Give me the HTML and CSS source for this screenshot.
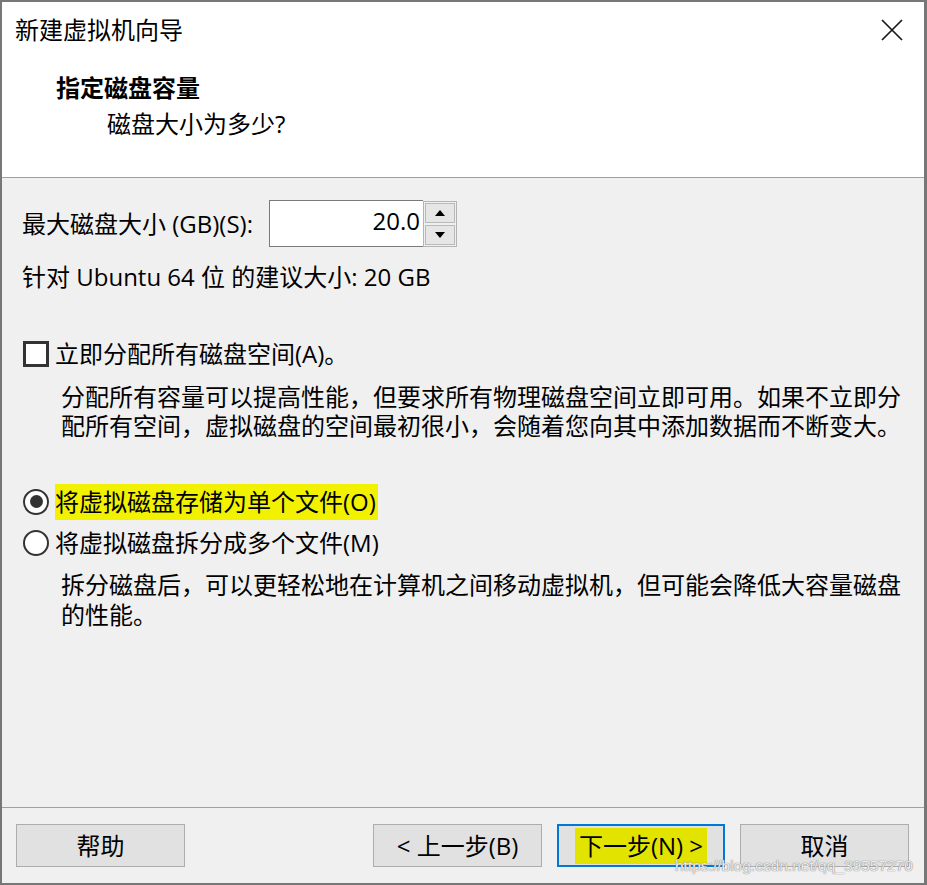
FILE: index.html
```html
<!DOCTYPE html>
<html lang="zh-CN">
<head>
<meta charset="utf-8">
<title>新建虚拟机向导</title>
<link rel="stylesheet" href="styles.css">
</head>
<body>
<div class="window">
  <div class="header">
    <div class="titlebar">
      <span class="title">新建虚拟机向导</span>
      <svg class="close" width="22" height="22" viewBox="0 0 22 22"><path d="M1 1 L21 21 M21 1 L1 21" stroke="#1a1a1a" stroke-width="1.7" fill="none"/></svg>
    </div>
    <div class="heading">指定磁盘容量</div>
    <div class="subheading">磁盘大小为多少?</div>
  </div>
  <div class="body">
    <div class="size-row">
      <span class="label">最大磁盘大小 (GB)(S):</span>
      <div class="spin">
        <div class="spin-input">20.0</div>
        <div class="spin-buttons">
          <div class="spin-btn"><svg width="10" height="6" viewBox="0 0 10 6"><path d="M0 6 L5 0 L10 6 Z" fill="#000"/></svg></div>
          <div class="spin-btn"><svg width="10" height="6" viewBox="0 0 10 6"><path d="M0 0 L10 0 L5 6 Z" fill="#000"/></svg></div>
        </div>
      </div>
    </div>
    <div class="recommend">针对 Ubuntu 64 位 的建议大小: 20 GB</div>
    <div class="check-row">
      <span class="checkbox"></span>
      <span class="opt-label">立即分配所有磁盘空间(A)。</span>
    </div>
    <div class="desc desc-a">分配所有容量可以提高性能，但要求所有物理磁盘空间立即可用。如果不立即分<br>配所有空间，虚拟磁盘的空间最初很小，会随着您向其中添加数据而不断变大。</div>
    <div class="radio-row radio-first">
      <span class="radio checked"></span>
      <span class="opt-label hl">将虚拟磁盘存储为单个文件(O)</span>
    </div>
    <div class="radio-row">
      <span class="radio"></span>
      <span class="opt-label">将虚拟磁盘拆分成多个文件(M)</span>
    </div>
    <div class="desc desc-b">拆分磁盘后，可以更轻松地在计算机之间移动虚拟机，但可能会降低大容量磁盘<br>的性能。</div>
  </div>
  <div class="footer">
    <button class="btn">帮助</button>
    <div class="spacer"></div>
    <div class="nav">
      <button class="btn">&lt; 上一步(B)</button>
      <button class="btn primary"><span class="hl-btn">下一步(N) &gt;</span></button>
      <button class="btn">取消</button>
    </div>
  </div>
  <div class="watermark">https://blog.csdn.net/qq_39557270</div>
</div>
</body>
</html>
```
FILE: styles.css
```css
* { box-sizing: border-box; }
html, body { margin: 0; padding: 0; }
body {
  background: #fff;
  font-family: "Open Sans", "Noto Sans CJK SC", sans-serif;
  font-size: 24px;
  color: #000;
}
.window {
  position: relative;
  width: 927px;
  height: 885px;
  border: 2px solid #777;
  border-right-width: 3px;
  background: #f0f0f0;
  display: flex;
  flex-direction: column;
}
.header {
  background: #fff;
  height: 176px;
  border-bottom: 1px solid #a0a0a0;
  flex: none;
}
.titlebar {
  display: flex;
  justify-content: space-between;
  align-items: center;
  padding: 12px 21px 0 13px;
  height: 44px;
}
.title { line-height: 32px; }
.heading {
  font-weight: bold;
  line-height: 32px;
  margin: 25px 0 0 54px;
  font-family: "Noto Sans CJK SC", sans-serif;
}
.subheading {
  line-height: 32px;
  margin: 5px 0 0 105px;
}
.body {
  flex: 1;
  padding: 0 0 0 20px;
  border-bottom: 1px solid #a0a0a0;
}
.size-row {
  display: flex;
  align-items: center;
  margin-top: 22px;
  height: 47px;
}
.label { line-height: 32px; margin-right: 16px; }
.spin {
  display: flex;
  height: 47px;
}
.spin-input {
  width: 154px;
  height: 47px;
  background: #fff;
  border: 1px solid #7a7a7a;
  border-right: none;
  text-align: right;
  padding: 0 3px 0 0;
  line-height: 40px;
}
.spin-buttons {
  width: 34px;
  height: 46px;
  margin-top: 1px;
  border: 1px solid #b4b4b4;
  display: flex;
  flex-direction: column;
  background: #f0f0f0;
}
.spin-btn {
  flex: 1;
  margin: 1px;
  background: #e6e6e6;
  border: 1px solid #b9b9b9;
  display: flex;
  align-items: center;
  justify-content: center;
}
.recommend {
  line-height: 32px;
  margin-top: 14px;
}
.check-row, .radio-row {
  display: flex;
  align-items: center;
}
.check-row {
  height: 32px;
  margin-top: 45px;
}
.checkbox {
  width: 26px;
  height: 26px;
  border: 3px solid #333;
  background: #fff;
  margin-left: 1px;
  margin-right: 6px;
  flex: none;
}
.opt-label { line-height: 32px; }
.desc {
  margin-left: 39px;
  line-height: 29px;
}
.desc-a { margin-top: 12px; }
.radio-row { height: 41px; }
.radio-first { margin-top: 41px; }
.radio {
  width: 26px;
  height: 26px;
  border: 2.5px solid #333;
  border-radius: 50%;
  background: #fff;
  margin-left: 1px;
  margin-right: 6px;
  flex: none;
  display: flex;
  align-items: center;
  justify-content: center;
}
.radio.checked::after {
  content: "";
  width: 13px;
  height: 13px;
  border-radius: 50%;
  background: #333;
}
.hl {
  background: #f2f200;
  line-height: 36px;
  padding-right: 2px;
}
.desc-b { margin-top: 7px; line-height: 30px; }
.footer {
  flex: none;
  height: 75px;
  display: flex;
  align-items: flex-start;
  padding: 16px 15px 0 14px;
}
.spacer { flex: 1; }
.nav { display: flex; gap: 15px; }
.btn {
  width: 169px;
  height: 43px;
  background: #e1e1e1;
  border: 1px solid #adadad;
  font: inherit;
  font-size: 24px;
  color: #000;
  padding: 0;
  line-height: 38px;
}
.btn.primary {
  border: 2px solid #0078d7;
  width: 168px;
}
.hl-btn {
  background: #e3e300;
  padding: 0 4px;
  display: inline-block;
  line-height: 36px;
}
.watermark {
  position: absolute;
  left: 673px;
  top: 855px;
  font-family: "Liberation Sans", Arial, sans-serif;
  font-size: 15.5px;
  color: rgba(255, 255, 255, 0.85);
  text-shadow: 0 0 1px #777, 0 0 1px #999;
  white-space: nowrap;
}
```
